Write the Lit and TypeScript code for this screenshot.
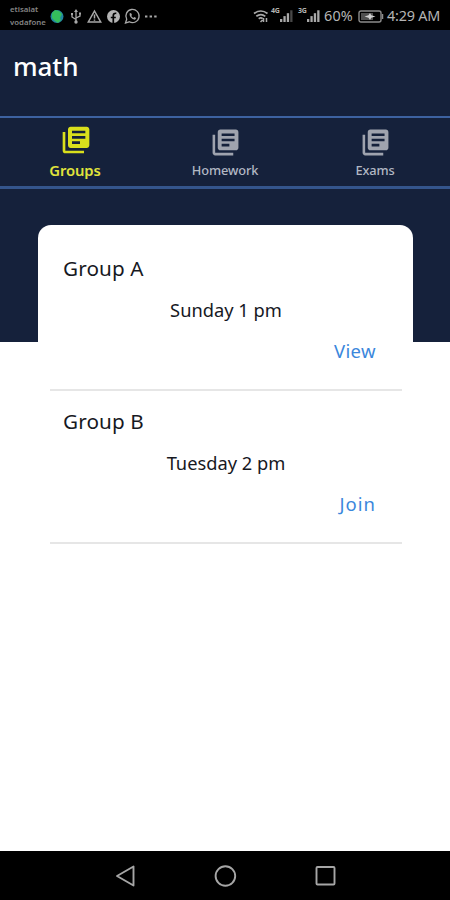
import { LitElement, html, css, svg } from "lit";
import { customElement } from "lit/decorators.js";

interface Tab { label: string; active?: boolean }
interface Group { name: string; time: string; action: string }

const TABS: Tab[] = [{ label: "Groups", active: true }, { label: "Homework" }, { label: "Exams" }];
const GROUPS: Group[] = [
  { name: "Group A", time: "Sunday 1 pm", action: "View" },
  { name: "Group B", time: "Tuesday 2 pm", action: "Join" },
];

const bars = (levels: number) => svg`
  ${[0, 1, 2, 3].map((i) => svg`<rect x=${i * 3.4} y=${9 - i * 2.9} width="2.3" height=${3 + i * 2.9}
    fill=${i < levels ? "#a8a8a8" : "#484848"}></rect>`)}`;

@customElement("status-bar")
class StatusBar extends LitElement {
  static styles = css`
    :host { display: flex; height: 30px; background: #000; color: #b4b4b4; box-sizing: border-box;
      align-items: center; justify-content: space-between; padding: 2px 9px 0 10px;
      font-family: "Noto Sans", sans-serif; }
    .side { display: flex; align-items: center; }
    .carriers { font-size: 7.8px; line-height: 13.5px; font-weight: 600; width: 37px; color: #858585; margin-right: 3px; }
    .carriers div { white-space: nowrap; }
    svg { display: block; flex: none; }
    .text { font-size: 14.4px; line-height: 20px; white-space: nowrap; }
    .pct { width: 31px; letter-spacing: 0.2px; margin-left: 3px; }
    .battery { margin: 0 3px 0 3px; }
    .time { letter-spacing: -0.2px; width: 54px; }
    .net { font-size: 7px; line-height: 7px; font-weight: 700; align-self: flex-start; margin: 1px 0 0 2px; width: 9px; letter-spacing: -0.3px; }
    .net.second { margin-left: 4px; }
  `;
  render() {
    return html`
      <div class="side">
        <div class="carriers"><div>etisalat</div><div>vodafone</div></div>
        <svg width="110" height="20" viewBox="50 5 110 20" fill="none" stroke="#a8a8a8" stroke-width="1.3">
          <circle cx="57" cy="15.5" r="6.5" fill="#2186a0" stroke="none"/>
          <path d="M52 12l3-3 4 1 3 3-2 4 1 2-3 3-3-2-3-3z" fill="#35bd5c" stroke="none"/>
          <path d="M76 10v11M72 13v3l4 2.5M80 12v3l-4 2"/>
          <path d="M74 11l2-3 2 3zM71 12h2v2h-2zM79 11.500h2v2h-2z" fill="#a8a8a8" stroke="none"/>
          <circle cx="76" cy="21" r="1.700" fill="#a8a8a8" stroke="none"/>
          <path d="M94.500 10l6.200 11H88.300zM94.500 13.500v4M94.500 18.500v1.300" stroke-width="1.5"/>
          <circle cx="113.500" cy="15.500" r="6.500" fill="#b4b4b4" stroke="none"/>
          <path d="M113.300 22v-7.500q0-2.500 3-2.200M110.800 16.500h5" stroke="#000" stroke-width="1.700"/>
          <path d="M125.500 22l1.200-3.800a6.600 6.600 0 1 1 2.600 2.600z"/>
          <path d="M129.500 12.500q0 5 5.500 6.300l1.200-1.800-2-1-1 .9-2-2 .8-1-1-2z" fill="#a8a8a8" stroke="none"/>
          <path d="M145 15.500h2.400M149.600 15.500h2.400M154.200 15.500h2.400" stroke-width="2"/>
        </svg>
      </div>
      <div class="side">
        <svg width="16" height="14" viewBox="0 0 16 14" fill="none" stroke="#a8a8a8" stroke-width="1.700">
          <path d="M1 4.500q7-5 13.500 0M3.300 7.300q4.700-3.500 9 0M5.700 9.700q2.200-1.600 4 0"/>
          <path d="M7.500 13l2-2M10.500 13V9M13.500 9v4" stroke-width="1.500"/>
        </svg>
        <span class="net">4G</span>
        <svg width="14" height="13" viewBox="0 0 14 13">${bars(3)}</svg>
        <span class="net second">3G</span>
        <svg width="14" height="13" viewBox="0 0 14 13">${bars(4)}</svg>
        <span class="text pct">60%</span>
        <svg class="battery" width="26" height="13" viewBox="0 0 26 13">
          <rect x="1" y="1" width="22" height="11" rx="2" fill="none" stroke="#8c8c8c" stroke-width="1.400"/>
          <rect x="3" y="3" width="12" height="7" fill="#505050"/>
          <path d="M24.500 4v5" stroke="#8c8c8c" stroke-width="1.500"/>
          <path d="M6.500 6.500l4-1.200 1.500-2.300 1.200 2.200 4.300 1.300-4.300 1.300-1.200 2.200-1.500-2.300z" fill="#d0d0d0"/>
        </svg>
        <span class="text time">4:29 AM</span>
      </div>`;
  }
}

@customElement("tab-strip")
class TabStrip extends LitElement {
  static styles = css`
    :host { display: grid; grid-template-columns: repeat(3, 1fr); height: 73px; box-sizing: border-box;
      border-top: 2px solid #3d62a0; border-bottom: 3px solid #34558c; background: #15213b;
      font-family: "Noto Sans", sans-serif; }
    .tab { display: flex; flex-direction: column; align-items: center; color: #b2b8c4; padding-top: 9px; }
    .tab svg { width: 31px; height: 31px; fill: #9fa3ae; margin-left: 1px; }
    .label { font-size: 12.8px; line-height: 18px; margin-top: 3px; font-weight: 500; letter-spacing: -0.1px; }
    .active { color: #e0e43c; padding-top: 6px; }
    .active svg { width: 32px; height: 32px; fill: #d9df1c; }
    .active .label { font-size: 14.8px; font-weight: 600; letter-spacing: -0.1px; margin-top: 5px; }
  `;
  render() {
    return TABS.map((t) => html`
      <div class="tab ${t.active ? "active" : ""}">
        <svg viewBox="0 0 24 24"><path d="M4 6H2v14c0 1.100.9 2 2 2h14v-2H4V6zm16-4H8c-1.100 0-2 .9-2 2v12c0 1.100.9 2 2 2h12c1.100 0 2-.9 2-2V4c0-1.100-.9-2-2-2zm-1 9H9V9h10v2zm-4 4H9v-2h6v2zm4-8H9V5h10v2z"/></svg>
        <span class="label">${t.label}</span>
      </div>`);
  }
}

@customElement("nav-bar")
class NavBar extends LitElement {
  static styles = css`
    :host { display: flex; height: 49px; background: #000; justify-content: center; align-items: center; gap: 76px; }
    svg { display: block; width: 24px; height: 24px; fill: none; stroke: #a6a6a6; stroke-width: 1.9; }
  `;
  render() {
    return html`
      <svg viewBox="0 0 24 24"><path d="M4 12L20.500 2.500v19z" stroke-linejoin="round"/></svg>
      <svg viewBox="0 0 24 24"><circle cx="12.400" cy="12" r="9.800"/></svg>
      <svg viewBox="0 0 24 24"><rect x="3.500" y="3" width="18" height="17.500" rx="1"/></svg>`;
  }
}

@customElement("app-root")
class AppRoot extends LitElement {
  static styles = css`
    :host { display: flex; flex-direction: column; width: 450px; height: 900px; overflow: hidden;
      background: #fff; font-family: "Noto Sans", sans-serif; color: #17191f; }
    .title { box-sizing: border-box; height: 86px; margin: 0; padding: 18px 13px 0; background: #15213b;
      color: #fff; font-size: 26px; line-height: 37px; font-weight: 500; letter-spacing: -0.1px; }
    .body { flex: 1; padding: 36px 37px 0 38px; background: linear-gradient(#15213b 153.5px, #fff 153.5px); }
    .panel { background: #fff; border-radius: 13px 13px 0 0; padding: 13px 11px 0 12px; }
    .group { display: flex; flex-direction: column; height: 153px; box-sizing: border-box; border-bottom: 2px solid #e6e6e6; }
    .name { font-size: 20.7px; line-height: 30px; padding: 15px 0 0 13px; letter-spacing: 0.1px; }
    .time { font-size: 18.3px; line-height: 26px; margin-top: 14px; text-align: center; }
    .action { font-size: 18.5px; line-height: 26px; margin-top: 15px; padding-right: 26px; text-align: right;
      color: #3b87dc; letter-spacing: 0.4px; }
    .group:last-child .action { letter-spacing: 1px; }
  `;
  render() {
    return html`
      <status-bar></status-bar>
      <h1 class="title">math</h1>
      <tab-strip></tab-strip>
      <main class="body">
        <section class="panel">
          ${GROUPS.map((g) => html`
            <div class="group">
              <div class="name">${g.name}</div>
              <div class="time">${g.time}</div>
              <div class="action">${g.action}</div>
            </div>`)}
        </section>
      </main>
      <nav-bar></nav-bar>`;
  }
}
